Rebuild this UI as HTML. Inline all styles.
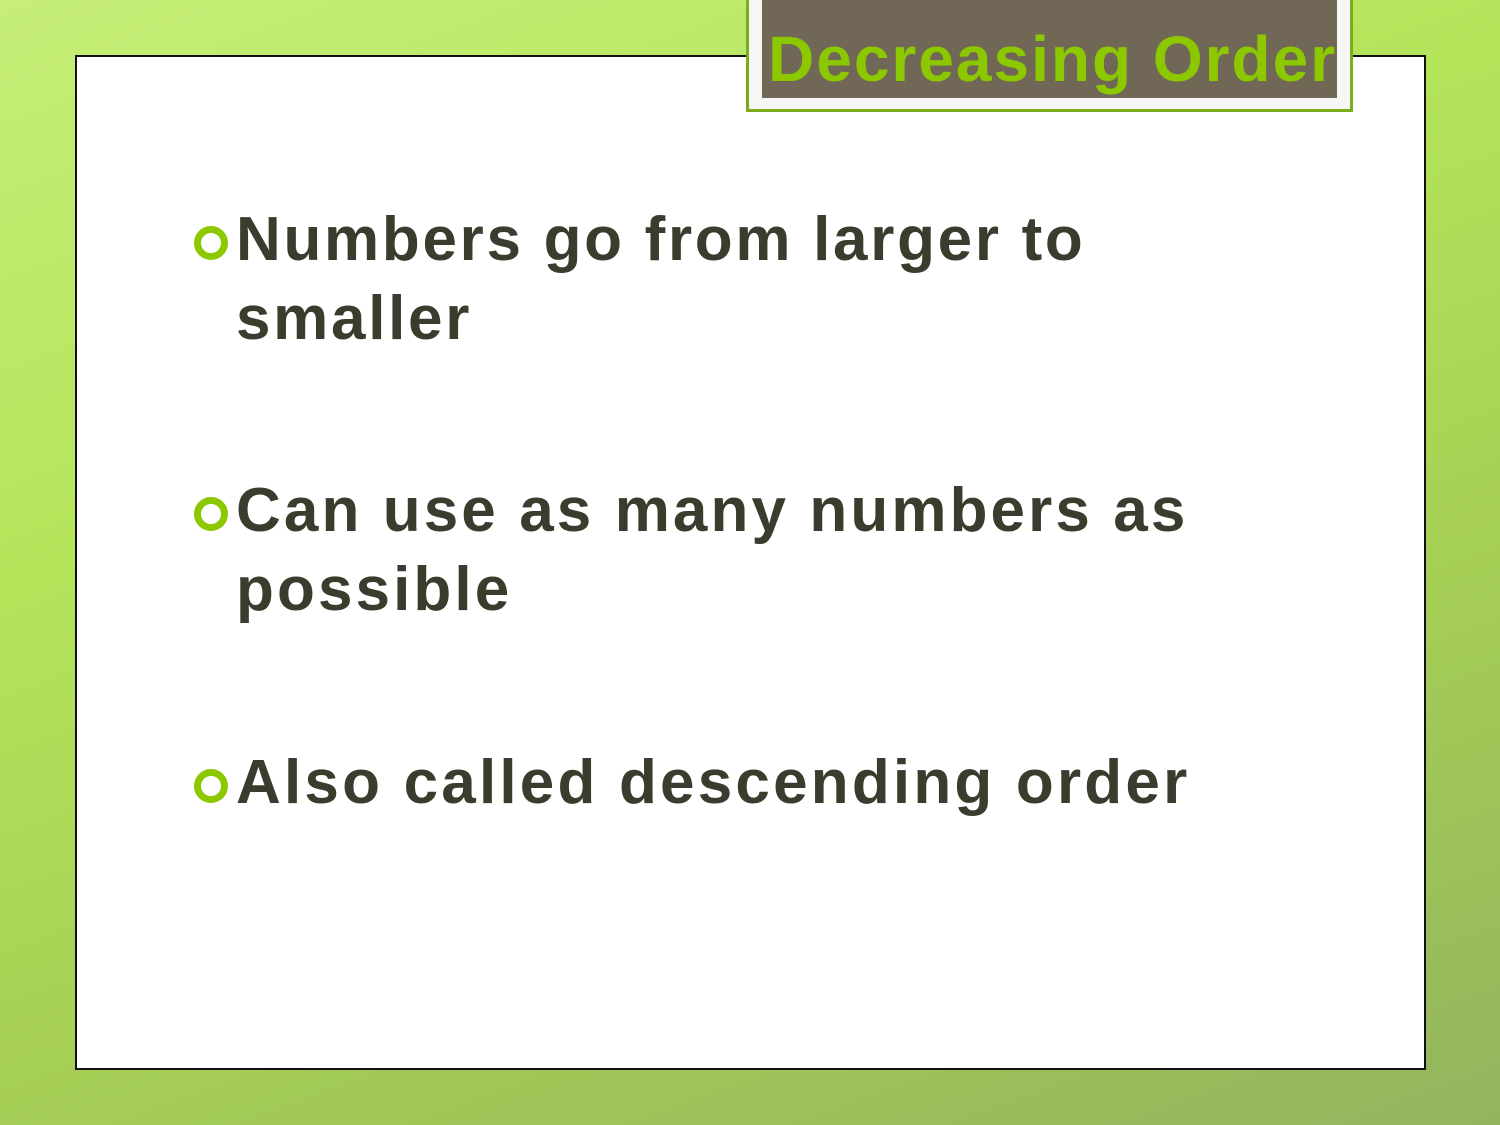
<!DOCTYPE html>
<html><head><meta charset="utf-8"><style>
html,body{margin:0;padding:0}
body{width:1500px;height:1125px;position:relative;overflow:hidden;
background:linear-gradient(160deg,#c6ee78 0%,#b4e45a 35%,#a6cf55 65%,#93b45e 100%);
font-family:"Liberation Sans",sans-serif;}
.card{position:absolute;left:75px;top:55px;width:1347px;height:1011px;background:#fff;border:2px solid #111;}
.tb{position:absolute;left:746px;top:-4px;width:607px;height:116px;background:#f6f6f4;border:3px solid #7cac1c;border-top:none;box-sizing:border-box;}
.tg{position:absolute;left:762px;top:0;width:575px;height:98px;background:#716756;}
.title{position:absolute;left:768px;top:22px;font-size:64px;font-weight:bold;color:#8cc800;white-space:nowrap;letter-spacing:2px}
.li{position:absolute;left:236px;font-size:62px;font-weight:bold;color:#3b3b2e;line-height:79px;white-space:nowrap;letter-spacing:2.7px}
.b{position:absolute;left:194px;width:20px;height:20px;border:7px solid #8cc800;border-radius:50%}
</style></head><body>
<div class="card"></div>
<div class="tb"></div>
<div class="tg"></div>
<div class="title">Decreasing Order</div>
<div class="b" style="top:226px"></div>
<div class="li" style="top:200px">Numbers go from larger to<br>smaller</div>
<div class="b" style="top:497px"></div>
<div class="li" style="top:471px;letter-spacing:3.1px">Can use as many numbers as<br>possible</div>
<div class="b" style="top:769px"></div>
<div class="li" style="top:743px;letter-spacing:3.2px">Also called descending order</div>
</body></html>
